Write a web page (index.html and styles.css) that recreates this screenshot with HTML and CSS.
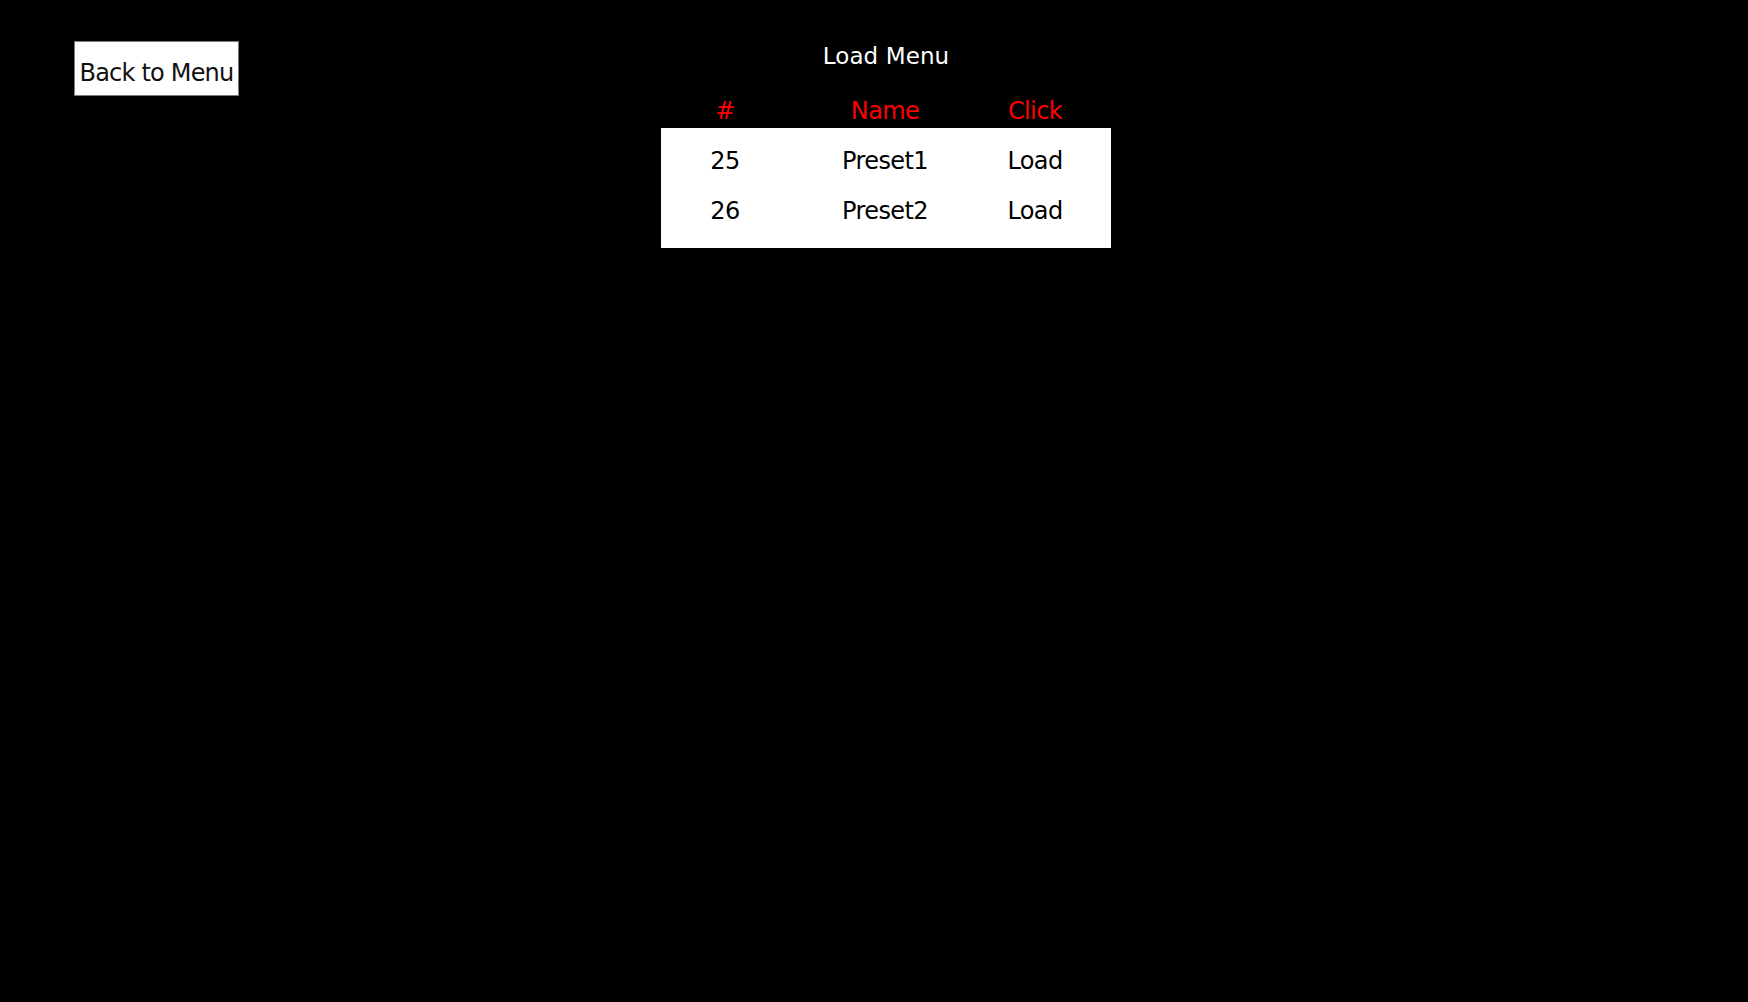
FILE: index.html
```html
<!DOCTYPE html>
<html>
<head>
<meta charset="utf-8">
<title>Load Menu</title>
<link rel="stylesheet" href="styles.css">
</head>
<body>
<div class="page">
  <div class="side">
    <button class="back">Back to Menu</button>
  </div>
  <main class="main">
    <h1 class="title">Load Menu</h1>
    <div class="table">
      <div class="row head">
        <span class="c1">#</span><span class="c2">Name</span><span class="c3">Click</span>
      </div>
      <div class="body">
        <div class="row">
          <span class="c1">25</span><span class="c2">Preset1</span><span class="c3">Load</span>
        </div>
        <div class="row">
          <span class="c1">26</span><span class="c2">Preset2</span><span class="c3">Load</span>
        </div>
      </div>
    </div>
  </main>
</div>
</body>
</html>
```
FILE: styles.css
```css
html, body {
  margin: 0;
  padding: 0;
  background: #000;
  height: 100%;
}
body {
  font-family: "DejaVu Sans", sans-serif;
}
.page {
  display: grid;
  grid-template-columns: 165px 450px;
  column-gap: 422px;
  padding: 41px 0 0 74px;
}
.back {
  box-sizing: border-box;
  width: 165px;
  height: 55px;
  margin: 0;
  padding: 8px 0 0 0;
  background: #fff;
  border: 1px solid #7a7a7a;
  color: #111;
  font-family: "DejaVu Sans", sans-serif;
  font-size: 24px;
  letter-spacing: -0.8px;
  text-align: center;
  line-height: 30px;
}
.title {
  margin: 0;
  font-size: 23px;
  font-weight: normal;
  line-height: 30px;
  color: #fff;
  text-align: center;
  letter-spacing: 0.1px;
}
.table {
  margin-top: 25px;
}
.row {
  display: grid;
  grid-template-columns: 128px 192px 108px;
  height: 50px;
  line-height: 50px;
  font-size: 24px;
  color: #000;
  text-align: center;
  letter-spacing: -0.6px;
}
.row.head {
  height: 32px;
  line-height: 30px;
  color: #ff0000;
}
.body {
  background: #fff;
  padding: 8px 0 12px 0;
}
```
